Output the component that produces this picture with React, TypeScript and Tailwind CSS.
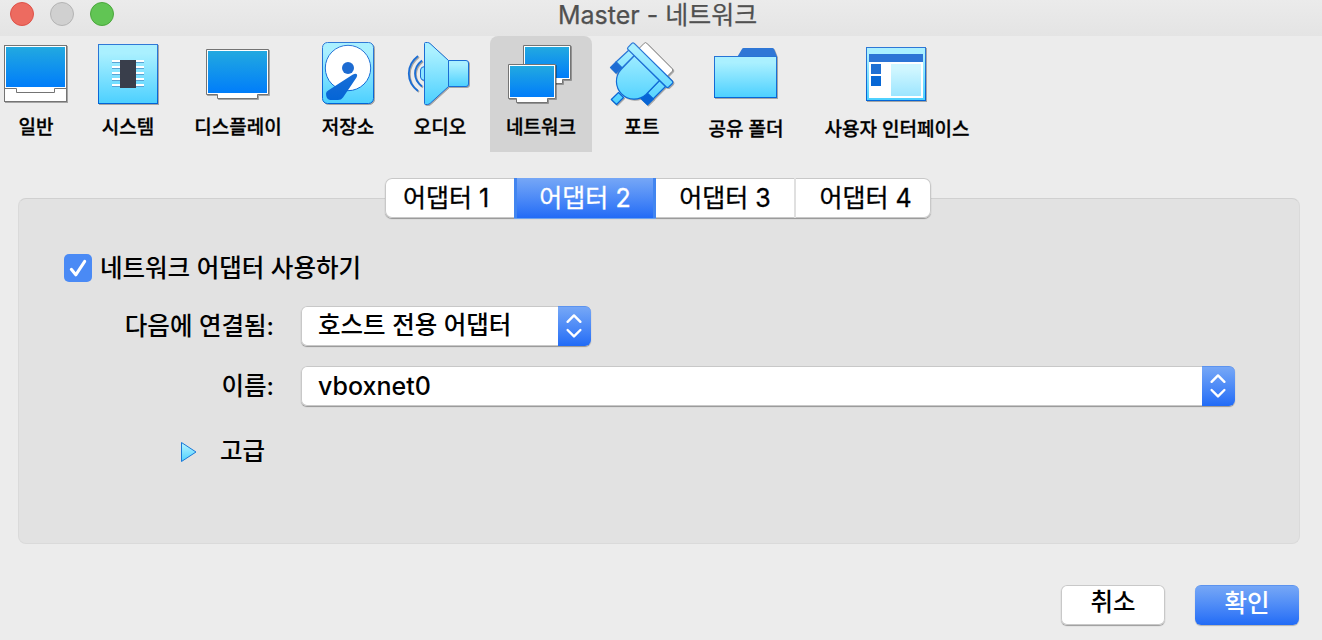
import React from "react";

type ToolItem = {
  label: string;
  cell: string;
  text?: string;
  x: number;
  w: number;
  icon: React.ReactNode;
};

const Shadowed = ({ children }: { children: React.ReactNode }) => (
  <g filter="url(#drop)">{children}</g>
);

const Defs = () => (
  <svg className="absolute h-0 w-0" aria-hidden="true">
    <defs>
      <linearGradient id="screen" x1="0" y1="0" x2="0" y2="1">
        <stop offset="0" stopColor="#22a9e0" />
        <stop offset="1" stopColor="#007dfa" />
      </linearGradient>
      <linearGradient id="cyan" x1="0" y1="0" x2="0" y2="1">
        <stop offset="0.15" stopColor="#aaf0ff" />
        <stop offset="1" stopColor="#4cd0ff" />
      </linearGradient>
      <linearGradient id="cyanPort" gradientUnits="userSpaceOnUse" x1="0" y1="42" x2="0" y2="105">
        <stop offset="0.1" stopColor="#aaf0ff" />
        <stop offset="1" stopColor="#4cd0ff" />
      </linearGradient>
      <linearGradient id="edge" gradientUnits="userSpaceOnUse" x1="0" y1="42" x2="0" y2="105">
        <stop offset="0" stopColor="#3279d6" />
        <stop offset="1" stopColor="#0063d6" />
      </linearGradient>
      <filter id="drop" x="-10%" y="-10%" width="125%" height="125%" colorInterpolationFilters="sRGB">
        <feDropShadow dx="1" dy="1" stdDeviation="0.3" floodColor="#000" floodOpacity="0.3" />
      </filter>
    </defs>
  </svg>
);

const items: ToolItem[] = [
  {
    label: "일반",
    cell: "w-[72px]",
    x: 0,
    w: 72,
    icon: (
      <Shadowed>
        <rect x="4.5" y="45.5" width="62" height="56" fill="#fff" stroke="#747474" />
        <rect x="6" y="47" width="59" height="40" fill="url(#screen)" />
        <path d="M4.5 88.5H16.5V92.5H54.5V88.5H66.5" fill="none" stroke="#747474" />
      </Shadowed>
    ),
  },
  {
    label: "시스템",
    cell: "w-[112px]",
    x: 72,
    w: 112,
    icon: (
      <Shadowed>
        <rect x="98.5" y="44.5" width="59" height="59" fill="url(#cyan)" stroke="url(#edge)" />
        {[60, 66, 72, 78, 84].map((y) => (
          <g key={y}>
            <rect x="112" y={y} width="32" height="2" fill="#fff" />
            <rect x="112" y={y + 2} width="32" height="1" fill="#5aa4d4" />
          </g>
        ))}
        <rect x="120" y="60" width="16" height="28" fill="#393e4b" />
      </Shadowed>
    ),
  },
  {
    label: "디스플레이",
    cell: "w-[108px]",
    x: 184,
    w: 108,
    icon: (
      <Shadowed>
        <path d="M206.5 49.5H268.5V94.5H257.5V98.5H217.5V94.5H206.5Z" fill="#fff" stroke="#747474" />
        <rect x="208" y="51" width="59" height="42" fill="url(#screen)" />
      </Shadowed>
    ),
  },
  {
    label: "저장소",
    cell: "w-[112px]",
    x: 292,
    w: 112,
    icon: (
      <Shadowed>
        <rect x="322.5" y="42.5" width="51" height="61" rx="5" fill="url(#cyan)" stroke="url(#edge)" />
        <circle cx="348" cy="68" r="22.7" fill="#fff" stroke="url(#edge)" />
        <circle cx="348" cy="68" r="6" fill="#1d6bd1" />
        <path d="M352.5 74.7Q356 72.8 357 74.5Q357.5 75.5 356.5 77.5L343 97.5Q341.3 100 338 100H330Q326 99 326 93.5Q326 91.7 328.5 90.3Z" fill="url(#edge)" />
      </Shadowed>
    ),
  },
  {
    label: "오디오",
    cell: "w-[72px] mr-[14px]",
    x: 404,
    w: 72,
    icon: (
      <Shadowed>
        <g fill="url(#cyan)" stroke="#1a6dd4">
          <path d="M424.5 66.5Q420.5 67 420.5 70V77Q420.5 80 424.5 80.5Z" fill="#8ee5ff" />
          <path d="M448.5 60.5H466Q468.5 60.5 468.5 63V84Q468.5 86.5 466 86.5H448.5Z" />
          <path d="M424.5 43.5Q424.5 42.5 425.5 42.5H427.5Q429 42.5 430 43.5L448.5 60.5V86.5L430.5 103Q429 104.5 427.5 104.5H425.5Q424.5 104.5 424.5 103.5Z" />
        </g>
        <path d="M418 56Q408.8 63 408.8 73.5T418 91M422 60.5Q415 66 415 73.5T422 86.5" fill="none" stroke="#1a6dd4" strokeWidth="1.8" />
      </Shadowed>
    ),
  },
  {
    label: "네트워크",
    cell: "w-[102px] rounded-t-lg bg-[#d3d3d3]",
    x: 490,
    w: 102,
    icon: (
      <>
        <Shadowed>
          <path d="M523.5 45.5H570.5V79.5H562.5V83.5H532.5V79.5H523.5Z" fill="#fff" stroke="#747474" />
          <rect x="525" y="47" width="44" height="31" fill="url(#screen)" />
        </Shadowed>
        <Shadowed>
          <path d="M508.5 64.5H555.5V98.5H547.5V102.5H516.5V98.5H508.5Z" fill="#fff" stroke="#747474" />
          <rect x="510" y="66" width="44" height="31" fill="url(#screen)" />
        </Shadowed>
      </>
    ),
  },
  {
    label: "포트",
    cell: "w-[100px]",
    x: 592,
    w: 100,
    icon: (
      <Shadowed>
        <path d="M638.5 49L644.3 43.2Q645.5 42 646.7 43.2L672.3 68.8Q673.5 70 672.3 71.2L667 76.5Z" fill="#fff" stroke="#808080" />
        <g fill="url(#cyanPort)" stroke="url(#edge)" strokeWidth="1.2" strokeLinejoin="round">
          <path d="M629.5 49.5L635 55L622 68L616 62Z" />
          <path d="M659.5 80.5L665.5 86.5L653 99L647 93Z" />
          <path d="M616 62L622 68L616 73L610.5 67.5Z" fill="#1c6cd3" />
          <path d="M647 93L653.3 99L647.5 104.8L641 98.5Z" fill="#0864d6" />
          <path d="M618.5 92.5L623.5 97.5L616.5 104.5L611.3 99.5Z" />
          <path d="M634.5 55.5L621 69.5A17.7 17.7 0 0 0 646 94.5L659.5 80.5Z" />
          <path d="M628 49.5Q627 48.3 628 47.3L631.8 43.4Q633 42.3 634.2 43.4L672.3 81Q673.5 82.3 672.3 83.5L668.7 87Q667.5 88 666.3 87Z" />
        </g>
      </Shadowed>
    ),
  },
  {
    label: "공유 폴더",
    cell: "w-[108px]",
    text: "mt-[2px]",
    x: 692,
    w: 108,
    icon: (
      <Shadowed>
        <path d="M737.5 56.5L742 49Q742.5 48 743.5 48H772.5Q773.5 48 774 49L777 56.5Z" fill="#2f77d6" />
        <rect x="714.5" y="56.5" width="62" height="41" fill="url(#cyan)" stroke="url(#edge)" />
      </Shadowed>
    ),
  },
  {
    label: "사용자 인터페이스",
    cell: "w-[194px]",
    text: "mt-[2px]",
    x: 800,
    w: 194,
    icon: (
      <Shadowed>
        <rect x="866.5" y="47.5" width="59" height="53" fill="url(#cyan)" stroke="url(#edge)" />
        <rect x="869" y="54" width="54" height="8" fill="#2c74d5" />
        <rect x="869" y="62" width="54" height="36" fill="#fff" />
        <rect x="871" y="64" width="10" height="10" fill="#1f6fd3" />
        <rect x="871" y="76" width="10" height="10" fill="#0767d5" />
        <rect x="891" y="64" width="30" height="32" fill="url(#cyan)" opacity="0.55" />
      </Shadowed>
    ),
  },
];

const Stepper = () => (
  <div className="flex h-[40px] w-[33px] justify-center rounded-r-[6px] border-t border-[#5c93ef] bg-linear-to-b from-[#76a7f6] to-[#216bf6] pt-[5px] pr-px">
    <svg width="18" height="28" viewBox="0 0 18 28" fill="none" stroke="#fff" strokeWidth="2.4" strokeLinecap="round" strokeLinejoin="round">
      <path d="M2.6 9.8L9 3.4L15.4 9.8M2.6 18L9 24.4L15.4 18" />
    </svg>
  </div>
);

const Combo = ({ width, text, children }: { width: string; text: string; children: React.ReactNode }) => (
  <div className={`flex h-[40px] ${width} rounded-[6px] bg-white shadow-[0_0_0_1px_#c8c8c8_inset,0_1px_1px_#00000059]`}>
    <div className={`flex-1 pl-[17px] leading-[40px] ${text}`}>{children}</div>
    <Stepper />
  </div>
);

export default function App() {
  return (
    <div className="h-[640px] w-[1322px] overflow-hidden bg-[#ececec] font-['Inter','Noto_Sans_CJK_KR',sans-serif] font-medium whitespace-nowrap text-black">
      <Defs />
      <header className="flex h-[36px] bg-linear-to-b from-[#ebebeb] to-[#e4e4e4]">
        <div className="flex w-[558px] gap-[16px] pt-[2px] pl-[10px]">
          <span className="h-[24px] w-[24px] rounded-full border border-[#de5148] bg-[#ed6b60]" />
          <span className="h-[24px] w-[24px] rounded-full border border-[#b4b4b4] bg-[#d0d0d0]" />
          <span className="h-[24px] w-[24px] rounded-full border border-[#4ba73c] bg-[#61c554]" />
        </div>
        <h1 className="text-[25px] leading-[30px] font-normal text-[#505050] [-webkit-text-stroke:0.25px_#505050]">Master - 네트워크</h1>
      </header>

      <nav className="flex h-[116px]">
        {items.map((it) => (
          <button key={it.label} className={`flex h-[116px] shrink-0 flex-col items-center ${it.cell}`}>
            <svg className="block shrink-0" width={it.w} height="74" viewBox={`${it.x} 36 ${it.w} 74`}>
              {it.icon}
            </svg>
            <span className={`pt-px text-[19px] leading-[33px] [-webkit-text-stroke:0.3px_#000] ${it.text ?? ""}`}>{it.label}</span>
          </button>
        ))}
      </nav>

      <main className="mr-[22px] ml-[18px] mt-[46px] h-[346px] rounded-[8px] border border-[#dadada] border-t-[#d0d0d0] bg-[#e2e2e2] text-[24.5px]">
        <div className="-mt-[21px] ml-[366px] flex h-[40px] w-[546px] rounded-[7px] bg-white text-center text-[25px] leading-[41px] font-normal shadow-[0_0_0_1px_#c8c8c8_inset,0_1px_1px_#00000059]">
          <div className="w-[129px] pr-[7px] [-webkit-text-stroke:0.3px_#000]">어댑터 1</div>
          <div className="w-[142px] border-x-[3px] border-[#4285f0] bg-linear-to-b from-[#76a7f6] to-[#216bf6] text-white shadow-[0_1px_0_#6ba1ee] [-webkit-text-stroke:0.3px_#fff]">어댑터 2</div>
          <div className="w-[140px] border-r-2 border-[#e0e0e0] [-webkit-text-stroke:0.3px_#000]">어댑터 3</div>
          <div className="flex-1 pl-[4px] [-webkit-text-stroke:0.3px_#000]">어댑터 4</div>
        </div>

        <div className="mt-[36px] flex h-[28px] items-center pl-[45px]">
          <span className="flex h-[28px] w-[28px] items-center justify-center rounded-[5px] bg-[#4a8af5]">
            <svg width="28" height="28" viewBox="0 0 28 28" fill="none" stroke="#fff" strokeWidth="3" strokeLinecap="round" strokeLinejoin="round">
              <path d="M7.3 15.3L11.8 20.8L20.7 7.3" />
            </svg>
          </span>
          <span className="ml-[8px] leading-[28px]">네트워크 어댑터 사용하기</span>
        </div>

        <div className="mt-[24px] flex h-[40px]">
          <label className="mr-[27px] w-[255px] text-right leading-[41px]">다음에 연결됨:</label>
          <Combo width="w-[290px]" text="-mt-px">호스트 전용 어댑터</Combo>
        </div>
        <div className="mt-[20px] flex h-[40px]">
          <label className="mr-[27px] w-[255px] text-right leading-[41px]">이름:</label>
          <Combo width="w-[934px]" text="text-[25px]">vboxnet0</Combo>
        </div>

        <div className="mt-[29px] flex h-[32px] items-center pl-[161px]">
          <svg className="mt-[2px]" width="18" height="22" viewBox="0 0 18 22">
            <path d="M1.5 1.5L16 11L1.5 20.5Z" fill="url(#cyan)" stroke="#1a78d8" strokeLinejoin="round" />
          </svg>
          <span className="ml-[22px] leading-[32px]">고급</span>
        </div>
      </main>

      <footer className="mt-[41px] flex h-[40px] justify-end gap-[30px] pr-[23px] text-[24.5px]">
        <button className="h-[40px] w-[104px] rounded-[6px] bg-white pb-[5px] leading-[35px] shadow-[0_0_0_1px_#c8c8c8_inset,0_1px_1px_#00000059]">취소</button>
        <button className="h-[40px] w-[104px] rounded-[6px] border-t border-[#5c93ef] bg-linear-to-b from-[#76a7f6] to-[#216bf6] pb-[5px] leading-[34px] text-white shadow-[0_1px_1px_#00000040]">확인</button>
      </footer>
    </div>
  );
}
